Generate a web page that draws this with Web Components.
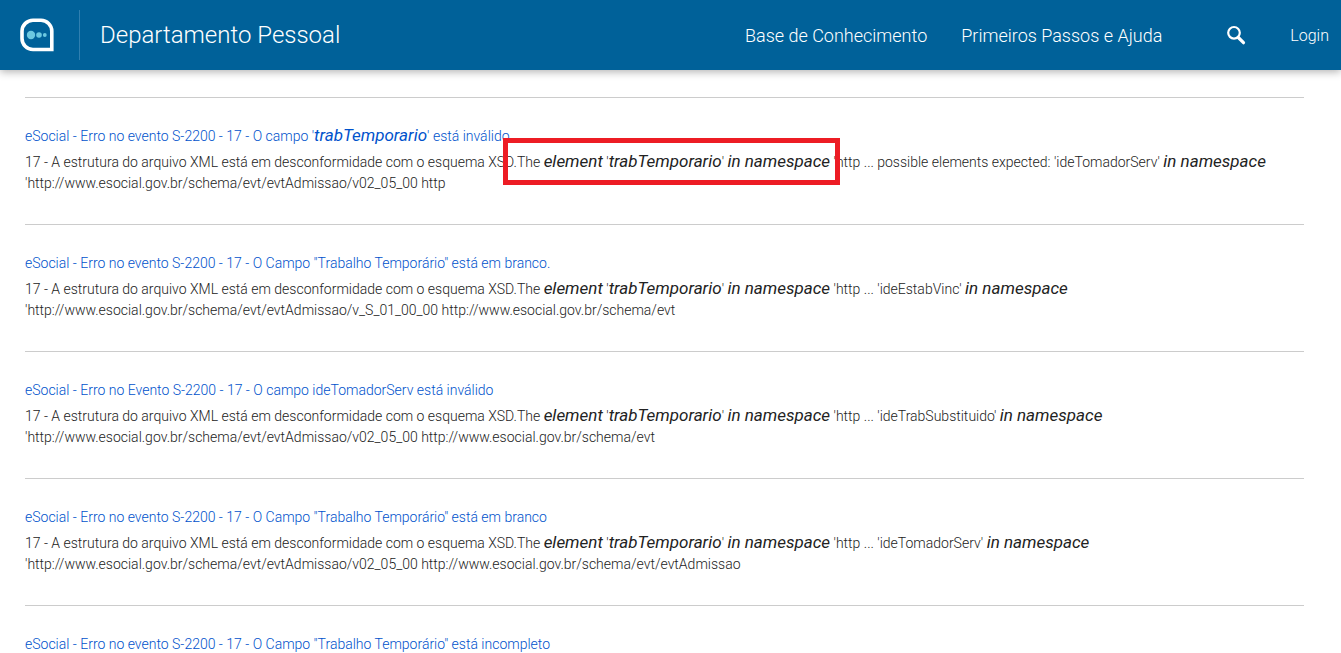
<!DOCTYPE html>
<html lang="pt-BR">
<head>
<meta charset="utf-8">
<meta name="viewport" content="width=device-width, initial-scale=1">
<title>Departamento Pessoal</title>
<style>
  body {
    margin: 0;
    font-family: Roboto, "Open Sans", sans-serif;
    font-weight: 300;
    font-size: 14px;
    line-height: 21px;
    color: #222;
    background: #fff;
  }
</style>
</head>
<body>
  <site-header>
    <span slot="title">Departamento Pessoal</span>
    <a slot="nav" href="#base">Base de Conhecimento</a>
    <a slot="nav" href="#ajuda">Primeiros Passos e Ajuda</a>
    <a slot="login" href="#login">Login</a>
  </site-header>

  <result-list>
    <search-result href="#1">
      <span slot="title">eSocial - Erro no evento S-2200 - 17 - O campo '<key-term>trabTemporario</key-term>' está inválido</span>
      17 - A estrutura do arquivo XML está em desconformidade com o esquema XSD.The <marked-phrase><key-term>element</key-term> '<key-term>trabTemporario</key-term>' <key-term>in namespace</key-term></marked-phrase> 'http ... possible elements expected: 'ideTomadorServ' <key-term>in namespace</key-term> 'http://www.esocial.gov.br/schema/evt/evtAdmissao/v02_05_00 http
    </search-result>
    <search-result href="#2">
      <span slot="title">eSocial - Erro no evento S-2200 - 17 - O Campo "Trabalho Temporário" está em branco.</span>
      17 - A estrutura do arquivo XML está em desconformidade com o esquema XSD.The <key-term>element</key-term> '<key-term>trabTemporario</key-term>' <key-term>in namespace</key-term> 'http ... 'ideEstabVinc' <key-term>in namespace</key-term> 'http://www.esocial.gov.br/schema/evt/evtAdmissao/v_S_01_00_00 http://www.esocial.gov.br/schema/evt
    </search-result>
    <search-result href="#3">
      <span slot="title">eSocial - Erro no Evento S-2200 - 17 - O campo ideTomadorServ está inválido</span>
      17 - A estrutura do arquivo XML está em desconformidade com o esquema XSD.The <key-term>element</key-term> '<key-term>trabTemporario</key-term>' <key-term>in namespace</key-term> 'http ... 'ideTrabSubstituido' <key-term>in namespace</key-term> 'http://www.esocial.gov.br/schema/evt/evtAdmissao/v02_05_00 http://www.esocial.gov.br/schema/evt
    </search-result>
    <search-result href="#4">
      <span slot="title">eSocial - Erro no evento S-2200 - 17 - O Campo "Trabalho Temporário" está em branco</span>
      17 - A estrutura do arquivo XML está em desconformidade com o esquema XSD.The <key-term>element</key-term> '<key-term>trabTemporario</key-term>' <key-term>in namespace</key-term> 'http ... 'ideTomadorServ' <key-term>in namespace</key-term> 'http://www.esocial.gov.br/schema/evt/evtAdmissao/v02_05_00 http://www.esocial.gov.br/schema/evt/evtAdmissao
    </search-result>
    <search-result href="#5">
      <span slot="title">eSocial - Erro no evento S-2200 - 17 - O Campo "Trabalho Temporário" está incompleto</span>
    </search-result>
  </result-list>

<script>
class SiteHeader extends HTMLElement {
  constructor() {
    super();

    this.attachShadow({ mode: 'open' });

    this.shadowRoot.innerHTML = `
        <style>
          :host {
            display: block;
          }
          header {
            display: flex;
            align-items: center;
            height: 70px;
            padding: 0 12px 0 20px;
            box-sizing: border-box;
            background: #006199;
            color: #fff;
            box-shadow: 0 2px 8px rgba(0, 0, 0, 0.3);
          }
          .logo {
            display: flex;
            padding-right: 25px;
          }
          .title {
            display: flex;
            align-items: center;
            height: 50px;
            padding-left: 20px;
            border-left: 1px solid #2f7fb0;
            font-size: 24px;
          }
          nav {
            display: flex;
            gap: 34px;
            margin-left: auto;
            font-size: 18px;
          }
          ::slotted(a) {
            color: inherit;
            text-decoration: none;
            white-space: nowrap;
          }
          button {
            display: flex;
            margin: 0 44px 0 64px;
            padding: 0;
            border: none;
            background: none;
            color: inherit;
            cursor: pointer;
          }
          .login {
            font-size: 16px;
          }
        </style>
        <header>
          <a class="logo" href="#inicio" aria-label="Início">
            <svg width="34" height="34" viewBox="0 0 34 34">
              <path d="M13 2.300H21A10.800 10.800 0 0 1 31.800 13V31.500H13A11 11 0 0 1 2 20.500V13A11 11 0 0 1 13 2.300Z" fill="none" stroke="#fff" stroke-width="3.600"/>
              <g fill="#6cc8e0">
                <circle cx="11" cy="17" r="4.200"/>
                <circle cx="19" cy="17" r="2.800"/>
                <circle cx="24.800" cy="17" r="1.900"/>
              </g>
            </svg>
          </a>
          <div class="title"><slot name="title"></slot></div>
          <nav><slot name="nav"></slot></nav>
          <button type="button" aria-label="Pesquisar">
            <svg width="20" height="20" viewBox="0 0 20 20" fill="none" stroke="#fff">
              <circle cx="8" cy="7.800" r="5.800" stroke-width="2.200"/>
              <path d="M12.300 12.500L17.500 17.700" stroke-width="3.200" stroke-linecap="round"/>
            </svg>
          </button>
          <div class="login"><slot name="login"></slot></div>
        </header>
      `;
  }
}

class ResultList extends HTMLElement {
  constructor() {
    super();

    this.attachShadow({ mode: 'open' });

    this.shadowRoot.innerHTML = `
        <style>
          :host {
            display: block;
            padding: 27px 37px 0 25px;
          }
          ::slotted(:last-child) {
            padding-bottom: 0;
          }
        </style>
        <slot></slot>
      `;
  }
}

class SearchResult extends HTMLElement {
  constructor() {
    super();

    this.attachShadow({ mode: 'open' });

    this.shadowRoot.innerHTML = `
        <style>
          :host {
            display: block;
            padding: 28px 0 30px;
            border-top: 1px solid #ccc;
          }
          a {
            display: block;
            color: #0052cc;
            text-decoration: none;
          }
          a:hover {
            text-decoration: underline;
          }
          p {
            margin: 5px 0 0;
          }
        </style>
        <a><slot name="title"></slot></a>
        <p><slot></slot></p>
      `;
  }

  connectedCallback() {
    this.shadowRoot.querySelector('a').href = this.getAttribute('href');
  }
}

class KeyTerm extends HTMLElement {
  constructor() {
    super();

    this.attachShadow({ mode: 'open' });

    // kept on one line so no space gets in around the term
    this.shadowRoot.innerHTML = '<style>em { font-size: 17px; font-weight: 400; line-height: 17px; }</style><em><slot></slot></em>';
  }
}

class MarkedPhrase extends HTMLElement {
  constructor() {
    super();

    this.attachShadow({ mode: 'open' });

    this.shadowRoot.innerHTML = `<style>
          :host {
            position: relative;
          }
          .frame {
            position: absolute;
            inset: -16px -10px -15px -41px;
            border: 5px solid #ed1c24;
            pointer-events: none;
          }
        </style><slot></slot><span class="frame"></span>`;
  }
}

customElements.define('site-header', SiteHeader);
customElements.define('result-list', ResultList);
customElements.define('search-result', SearchResult);
customElements.define('key-term', KeyTerm);
customElements.define('marked-phrase', MarkedPhrase);
</script>
</body>
</html>
